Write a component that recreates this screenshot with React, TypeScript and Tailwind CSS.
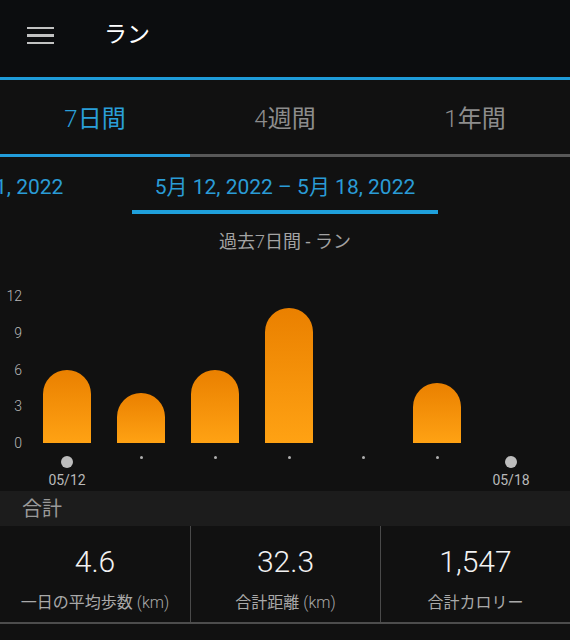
const tabs = [
  { num: '7', label: '日間', active: true },
  { num: '4', label: '週間', active: false },
  { num: '1', label: '年間', active: false },
];

// km per day, 05/12 - 05/18
const days = [6, 4.1, 6, 11, 0, 4.9, 0];
const PX_PER_KM = 12.25;

const stats = [
  { value: '4.6', label: '一日の平均歩数', unit: ' (km)' },
  { value: '32.3', label: '合計距離', unit: ' (km)' },
  { value: '1,547', label: '合計カロリー', unit: '' },
];

function MenuIcon() {
  return (
    <div className="flex flex-col gap-[5px] w-[27px]">
      <span className="h-[2.5px] bg-[#c2c2c2]" />
      <span className="h-[2.5px] bg-[#c2c2c2]" />
      <span className="h-[2.5px] bg-[#c2c2c2]" />
    </div>
  );
}

function Chart() {
  return (
    <div className="flex pt-[34px] mb-[3px]">
      <div className="w-[30px] h-[163px] flex flex-col justify-between items-end pr-[8px] text-[14px] leading-[16px] text-[#b9b9b9] font-light">
        {[12, 9, 6, 3, 0].map((v) => (
          <span key={v}>{v}</span>
        ))}
      </div>
      {days.map((km, i) => {
        const edge = i === 0 || i === days.length - 1;
        return (
          // eslint-disable-next-line react/no-array-index-key
          <div key={i} className="w-[74px] flex flex-col items-center pt-[8px]">
            <div className="h-[147px] w-full flex items-end justify-center">
              {km > 0 && (
                <div
                  className="w-[48px] rounded-t-full bg-linear-to-b from-[#ea8000] to-[#ffa213]"
                  style={{ height: km * PX_PER_KM }}
                />
              )}
            </div>
            {edge ? (
              <>
                <span className="mt-[13px] size-[12px] rounded-full bg-[#bdbdbd]" />
                <span className="mt-[4px] text-[14px] leading-[16px] text-[#b9b9b9]">
                  {i === 0 ? '05/12' : '05/18'}
                </span>
              </>
            ) : (
              <span className="mt-[13px] size-[3px] rounded-full bg-[#b0b0b0]" />
            )}
          </div>
        );
      })}
    </div>
  );
}

export default function App() {
  return (
    <div className="w-[570px] h-[640px] overflow-hidden bg-[#111111] font-['Roboto','Noto_Sans_CJK_JP',sans-serif]">
      <header className="h-[77px] bg-[#0c0d0f] flex items-center pl-[27px] pb-[6px]">
        <MenuIcon />
        <h1 className="ml-[50px] text-[23px] text-white">ラン</h1>
      </header>
      <div className="h-[3px] bg-[#1e9bd8]" />

      <nav className="h-[74px] grid grid-cols-3">
        {tabs.map((tab) => (
          <div
            key={tab.label}
            className={`flex items-center justify-center text-[24px] pt-[4px] ${tab.active ? 'text-[#2a9fd9]' : 'text-[#8d8d8d]'}`}
          >
            <span className="font-light">{tab.num}</span>
            {tab.label}
          </div>
        ))}
      </nav>
      <div className="h-[3px] flex">
        <div className="w-[190px] bg-[#229ddb]" />
        <div className="grow bg-[#585858]" />
      </div>

      {/* week pager: previous week peeks in from the left */}
      <div className="h-[58px] flex justify-center gap-[40px] overflow-hidden text-[21px] leading-[24px] text-[#2a9cd6]">
        <div className="w-[306px] shrink-0 flex flex-col items-center pt-[18px]">
          <span className="whitespace-nowrap">5月 5, 2022 – 5月 11, 2022</span>
        </div>
        <div className="w-[306px] shrink-0 flex flex-col items-center pt-[18px]">
          <span className="whitespace-nowrap">5月 12, 2022 – 5月 18, 2022</span>
          <span className="mt-[11px] h-[4px] w-full bg-[#1fa0dc]" />
        </div>
        <div className="w-[306px] shrink-0" />
      </div>

      <p className="mt-[15px] text-center text-[18px] leading-[24px] text-[#a3a3a3]">
        過去<span className="font-light">7</span>日間 - ラン
      </p>

      <Chart />

      <div className="h-[35px] bg-[#1c1c1c] flex items-center pl-[22px] text-[20px] text-[#9a9a9a]">
        合計
      </div>
      <div className="grid grid-cols-3 h-[98px] border-b-2 border-[#4d4d4d]">
        {stats.map((s, i) => (
          <div
            key={s.label}
            className={`flex flex-col items-center pt-[18px] ${i > 0 ? 'border-l border-[#4a4a4a]' : ''}`}
          >
            <span className="text-[30px] leading-[36px] font-light text-[#f2f2f2]">{s.value}</span>
            <span className="mt-[12px] text-[16px] leading-[22px] text-[#a9a9a9]">
              {s.label}
              <span className="font-light">{s.unit}</span>
            </span>
          </div>
        ))}
      </div>
    </div>
  );
}
